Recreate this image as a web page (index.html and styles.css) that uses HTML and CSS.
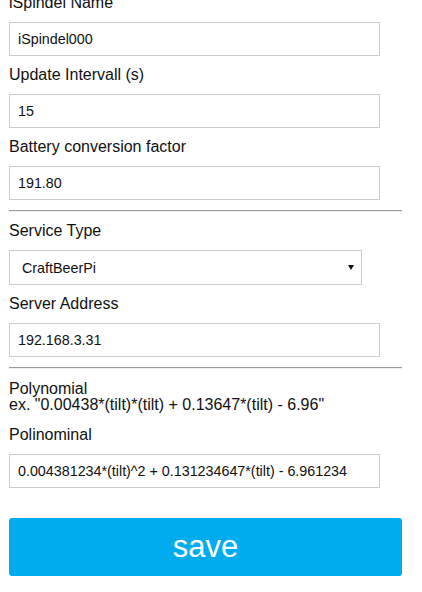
FILE: index.html
```html
<!DOCTYPE html>
<html lang="en">
<head>
    <meta charset="UTF-8">
    <meta name="viewport" content="width=device-width, initial-scale=1.0">
    <title>iSpindel Configuration</title>
    <link rel="stylesheet" href="styles.css">
</head>
<body>

    <!-- Formulaire de configuration iSpindel -->
    <form class="config" id="configForm">
        <label for="name">iSpindel Name</label>
        <input type="text" id="name" value="iSpindel000">

        <label for="sleep">Update Intervall (s)</label>
        <input type="text" id="sleep" value="15">

        <label for="vfact">Battery conversion factor</label>
        <input type="text" id="vfact" value="191.80">

        <hr>

        <label for="api">Service Type</label>
        <div class="select-wrap">
            <select id="api">
                <option>CraftBeerPi</option>
                <option>Ubidots</option>
                <option>HTTP</option>
            </select>
        </div>

        <label for="server">Server Address</label>
        <input type="text" id="server" value="192.168.3.31">

        <hr>

        <div class="hint">Polynomial<br>ex. "0.00438*(tilt)*(tilt) + 0.13647*(tilt) - 6.96"</div>

        <label for="poly" class="after-hint">Polinominal</label>
        <input type="text" id="poly" value="0.004381234*(tilt)^2 + 0.131234647*(tilt) - 6.961234">

        <button type="submit" class="save-btn">save</button>
    </form>

</body>
</html>
```

FILE: styles.css
```css
body {
    margin: 0;
    font-family: "Liberation Sans", Arial, sans-serif;
    font-size: 16px;
    color: #111;
    background-color: #fff;
}

.config {
    display: flex;
    flex-direction: column;
    gap: 10px;
    width: 393px;
    margin: -6px 0 0 9px;
}

label {
    display: block;
    line-height: 18px;
}

input {
    box-sizing: border-box;
    width: 371px;
    height: 34px;
    padding: 0 8px;
    font-family: "Liberation Sans", Arial, sans-serif;
    font-size: 14.3px;
    color: #111;
    border: 1px solid #ccc;
    border-radius: 0;
    outline: none;
}

hr {
    width: 100%;
    height: 0;
    margin: 0;
    border: none;
    border-top: 1px solid #9a9a9a;
    border-bottom: 1px solid #eee;
}

.select-wrap {
    position: relative;
    width: 353px;
}

select {
    box-sizing: border-box;
    width: 100%;
    height: 35px;
    padding: 0 12px;
    font-family: "Liberation Sans", Arial, sans-serif;
    font-size: 14.3px;
    color: #111;
    background: #fff;
    border: 1px solid #ccc;
    border-radius: 0;
    -webkit-appearance: none;
    appearance: none;
}

/* petite flèche du select */
.select-wrap::after {
    content: "";
    position: absolute;
    right: 8px;
    top: 15px;
    border-left: 3px solid transparent;
    border-right: 3px solid transparent;
    border-top: 5px solid #111;
    pointer-events: none;
}

.hint {
    margin-top: 2px;
    line-height: 16px;
}

.after-hint {
    margin-top: 2.5px;
}

.save-btn {
    margin-top: 20.5px;
    width: 100%;
    height: 58px;
    font-family: "Liberation Sans", Arial, sans-serif;
    font-size: 31px;
    color: #fff;
    background-color: #00aced;
    border: none;
    border-radius: 3px;
    cursor: pointer;
}
```
